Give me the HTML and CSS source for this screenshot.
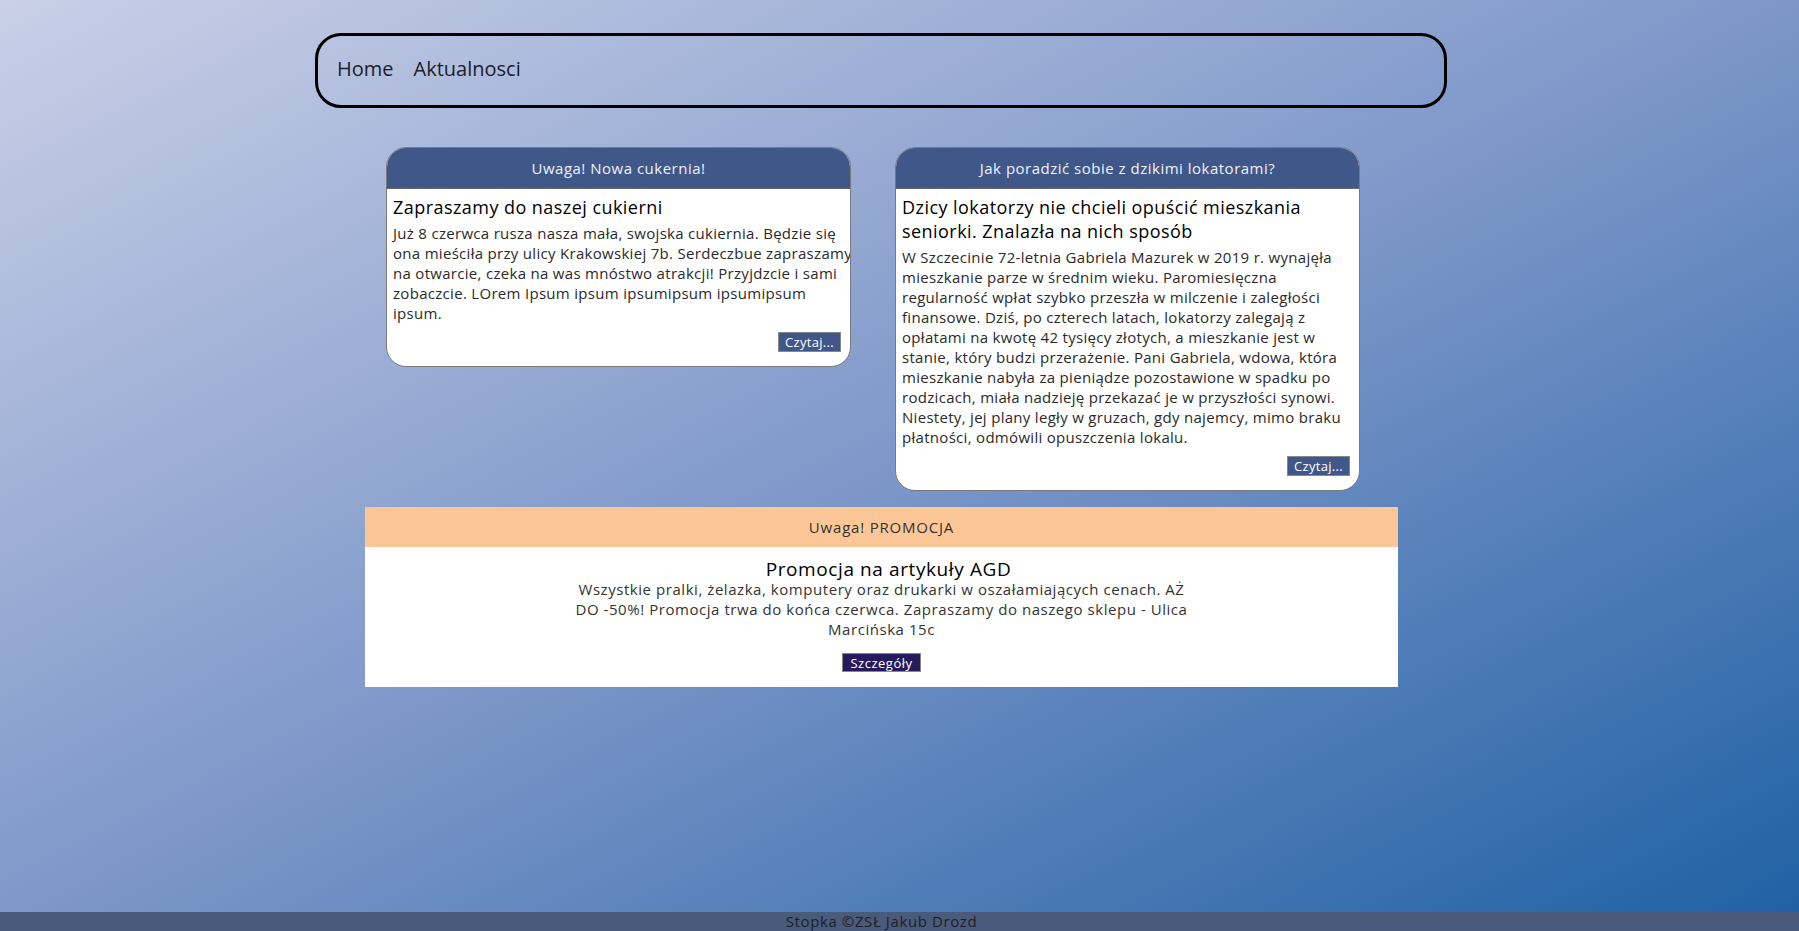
FILE: index.html
```html
<!DOCTYPE html>
<html lang="pl">
<head>
<meta charset="utf-8">
<title>Strona</title>
<link rel="stylesheet" href="styles.css">
</head>
<body>
<div class="page">
  <nav class="nav">
    <a class="nav-link" href="#">Home</a>
    <a class="nav-link" href="#">Aktualnosci</a>
  </nav>

  <div class="cards">
    <article class="card">
      <header class="card-head">Uwaga! Nowa cukernia!</header>
      <div class="card-body">
        <h2 class="card-title">Zapraszamy do naszej cukierni</h2>
        <p class="card-text">Już 8 czerwca rusza nasza mała, swojska cukiernia. Będzie się ona mieściła przy ulicy Krakowskiej 7b. Serdeczbue zapraszamy na otwarcie, czeka na was mnóstwo atrakcji! Przyjdzcie i sami zobaczcie. LOrem Ipsum ipsum ipsumipsum ipsumipsum ipsum.</p>
        <div class="card-actions"><button class="btn">Czytaj...</button></div>
      </div>
    </article>
    <article class="card">
      <header class="card-head">Jak poradzić sobie z dzikimi lokatorami?</header>
      <div class="card-body">
        <h2 class="card-title">Dzicy lokatorzy nie chcieli opuścić mieszkania seniorki. Znalazła na nich sposób</h2>
        <p class="card-text">W Szczecinie 72-letnia Gabriela Mazurek w 2019 r. wynajęła mieszkanie parze w średnim wieku. Paromiesięczna regularność wpłat szybko przeszła w milczenie i zaległości finansowe. Dziś, po czterech latach, lokatorzy zalegają z opłatami na kwotę 42 tysięcy złotych, a mieszkanie jest w stanie, który budzi przerażenie. Pani Gabriela, wdowa, która mieszkanie nabyła za pieniądze pozostawione w spadku po rodzicach, miała nadzieję przekazać je w przyszłości synowi. Niestety, jej plany legły w gruzach, gdy najemcy, mimo braku płatności, odmówili opuszczenia lokalu.</p>
        <div class="card-actions"><button class="btn">Czytaj...</button></div>
      </div>
    </article>
  </div>

  <section class="promo">
    <header class="promo-head">Uwaga! PROMOCJA</header>
    <div class="promo-body">
      <h2 class="promo-title">Promocja na artykuły AGD</h2>
      <p class="promo-text">Wszystkie pralki, żelazka, komputery oraz drukarki w oszałamiających cenach. AŻ DO -50%! Promocja trwa do końca czerwca. Zapraszamy do naszego sklepu - Ulica Marcińska 15c</p>
      <button class="btn btn-dark">Szczegóły</button>
    </div>
  </section>
</div>
<footer class="footer">Stopka ©ZSŁ Jakub Drozd</footer>
</body>
</html>
```

FILE: styles.css
```css
* { box-sizing: border-box; }

html, body { height: 100%; }

body {
  margin: 0;
  min-height: 931px;
  display: flex;
  flex-direction: column;
  font-family: "Open Sans", "Noto Sans", sans-serif;
  color: #222;
  background: linear-gradient(to bottom right, #c9d0e7 0%, #7d97c9 50%, #1e60a3 100%);
}

.page {
  flex: 1;
  display: flex;
  flex-direction: column;
}

.nav {
  margin: 33px 0 0 315px;
  width: 1132px;
  height: 75px;
  border: 3px solid #000;
  border-radius: 26px;
  display: flex;
  align-items: center;
  gap: 20px;
  padding: 0 0 5px 19px;
}

.nav-link {
  font-size: 20px;
  color: #1c1c2a;
  text-decoration: none;
}

.cards {
  display: flex;
  align-items: flex-start;
  gap: 44px;
  margin: 39px 0 0 386px;
}

.card {
  width: 465px;
  background: #fff;
  border: 1px solid #7a7a7a;
  border-radius: 20px;
  overflow: hidden;
}

.card-head {
  height: 41px;
  background: #3f5789;
  border-bottom: 1px solid #6a6a6a;
  color: #f0f2f8;
  font-size: 15px;
  letter-spacing: 0.5px;
  display: flex;
  align-items: center;
  justify-content: center;
}

.card-body {
  padding: 6px 0 14px 6px;
}

.card-title {
  margin: 0;
  font-size: 18px;
  font-weight: 500;
  letter-spacing: 0.45px;
  line-height: 24px;
  color: #000;
}

.card-text {
  margin: 4px -4px 0 0;
  font-size: 15px;
  letter-spacing: 0.3px;
  line-height: 20px;
  color: #2a2a2a;
}

.card-actions {
  display: flex;
  justify-content: flex-end;
  padding-right: 9px;
  margin-top: 9px;
}

.btn {
  font-family: inherit;
  font-size: 13px;
  letter-spacing: 0.3px;
  line-height: 16px;
  height: 20px;
  padding: 0 6px;
  border: 1px solid #888;
  background: #3f5789;
  color: #fff;
  cursor: pointer;
}

.btn-dark {
  background: #261a5c;
  letter-spacing: 0.5px;
  padding: 0 7px;
}

.promo {
  margin: 16px 0 0 365px;
  width: 1033px;
  background: #fff;
}

.promo-head {
  height: 40px;
  background: #fcc697;
  color: #333;
  font-size: 15px;
  letter-spacing: 0.8px;
  display: flex;
  align-items: center;
  justify-content: center;
}

.promo-body {
  display: flex;
  flex-direction: column;
  align-items: center;
  padding: 12px 0 15px;
}

.promo-title {
  margin: 0;
  padding-left: 14px;
  font-size: 19px;
  font-weight: 500;
  letter-spacing: 0.6px;
  line-height: 20px;
  color: #000;
}

.promo-text {
  margin: 0;
  width: 632px;
  text-align: center;
  font-size: 15px;
  letter-spacing: 0.55px;
  line-height: 20px;
  color: #333;
}

.promo-body .btn {
  margin-top: 14px;
  height: 19px;
}

.footer {
  height: 19px;
  background: #4a5a7a;
  color: #1e1e28;
  font-size: 15px;
  letter-spacing: 0.6px;
  line-height: 19px;
  text-align: center;
  padding-right: 36px;
}
```
